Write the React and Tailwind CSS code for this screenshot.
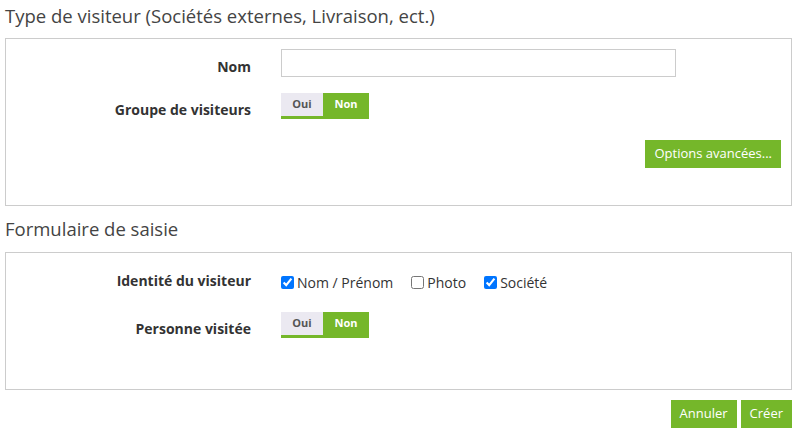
import { useState } from 'react';

function Toggle({ value, onChange }) {
  return (
    <div className="flex h-[26px] border-b-[3px] border-[#75b72a] text-[11px] font-bold">
      <button
        onClick={() => onChange(true)}
        className={`w-[42px] ${value ? 'bg-[#75b72a] text-white' : 'bg-[#ebe9f1] text-[#555]'}`}
      >
        Oui
      </button>
      <button
        onClick={() => onChange(false)}
        className={`w-[46px] ${!value ? 'bg-[#75b72a] text-white' : 'bg-[#ebe9f1] text-[#555]'}`}
      >
        Non
      </button>
    </div>
  );
}

function Row({ label, children, className = '', labelClass = 'translate-y-[3px]' }) {
  return (
    <div className={`flex items-center ${className}`}>
      <div className={`w-[245px] text-right text-[14px] font-bold text-[#333] ${labelClass}`}>{label}</div>
      <div className="ml-[30px] flex items-center">{children}</div>
    </div>
  );
}

function Check({ label, checked, onChange }) {
  return (
    <label className="mr-[18px] flex items-center text-[14px] text-[#333]">
      <input
        type="checkbox"
        checked={checked}
        onChange={onChange}
        className="m-0 h-[13px] w-[13px] accent-[#0075ff]"
      />
      <span className="ml-[3px]">{label}</span>
    </label>
  );
}

export default function App() {
  const [groupe, setGroupe] = useState(false);
  const [personne, setPersonne] = useState(false);
  const [ident, setIdent] = useState({ nom: true, photo: false, societe: true });

  const toggle = (k) => setIdent({ ...ident, [k]: !ident[k] });

  return (
    <div className="w-[796px] pl-[5px] pr-[4px] pt-[3px] font-['Open_Sans',sans-serif] text-[#333]">
      <h1 className="text-[18.5px] leading-[26px] text-[#444]">Type de visiteur (Sociétés externes, Livraison, ect.)</h1>
      <div className="mt-[9px] h-[168px] border border-[#ccc] pt-[10px]">
        <Row label="Nom">
          <input type="text" className="h-[28px] w-[395px] border border-[#ccc] px-2 text-[14px] outline-none" />
        </Row>
        <Row label="Groupe de visiteurs" className="mt-[16px]">
          <Toggle value={groupe} onChange={setGroupe} />
        </Row>
        <div className="mt-[21px] flex justify-end pr-[10px]">
          <button className="h-[28px] bg-[#75b72a] px-[9px] text-[13px] text-white">Options avancées...</button>
        </div>
      </div>

      <h2 className="mt-[10px] text-[18.5px] leading-[26px] text-[#444]">Formulaire de saisie</h2>
      <div className="mt-[10px] h-[138px] border border-[#ccc] pt-[16px]">
        <Row label="Identité du visiteur" className="h-[26px]" labelClass="-translate-y-[2px]">
          <Check label="Nom / Prénom" checked={ident.nom} onChange={() => toggle('nom')} />
          <Check label="Photo" checked={ident.photo} onChange={() => toggle('photo')} />
          <Check label="Société" checked={ident.societe} onChange={() => toggle('societe')} />
        </Row>
        <Row label="Personne visitée" className="mt-[17px]">
          <Toggle value={personne} onChange={setPersonne} />
        </Row>
      </div>

      <div className="mt-[10px] flex justify-end gap-[4px]">
        <button className="h-[28px] bg-[#75b72a] px-[9px] text-[13px] text-white">Annuler</button>
        <button className="h-[28px] bg-[#75b72a] px-[9px] text-[13px] text-white">Créer</button>
      </div>
    </div>
  );
}
